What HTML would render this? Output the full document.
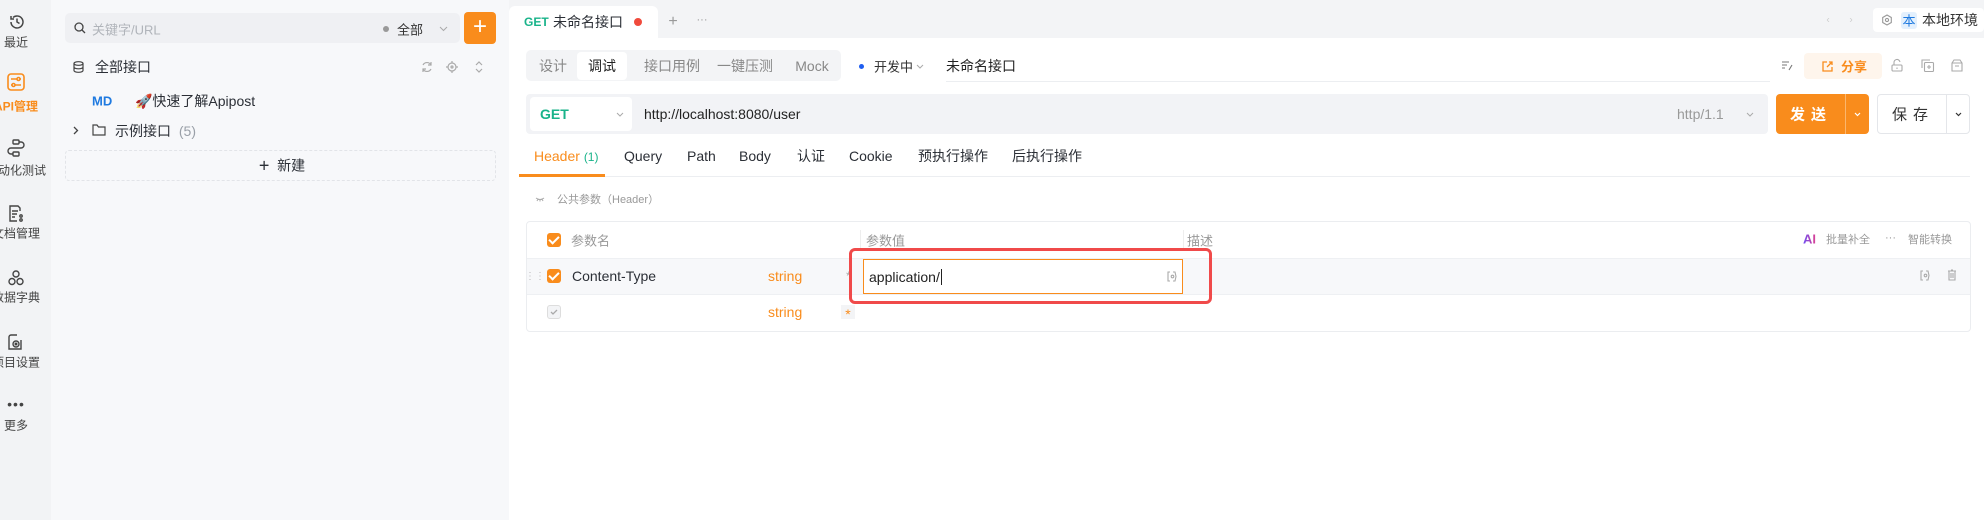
<!DOCTYPE html>
<html><head><meta charset="utf-8"><style>
*{margin:0;padding:0;box-sizing:border-box}
body{width:1984px;height:520px;overflow:hidden;background:#fff;font-family:"Liberation Sans","Noto Sans CJK SC",sans-serif;color:#2b2f36;position:relative}
.a{position:absolute;white-space:nowrap}
.c{transform:translate(-50%,-50%)}
.v{transform:translateY(-50%)}
.nav{left:0;top:0;width:51px;height:520px;background:#f2f3f5;overflow:hidden}
.nl{font-size:12px;color:#444;}
.side{left:51px;top:0;width:458px;height:520px;background:#f7f8fa}
.gray{color:#9aa0a8}
svg{position:absolute;overflow:visible}
.chk{position:absolute;width:14px;height:14px;border-radius:3px;background:#f98c1c}
.chk:after{content:"";position:absolute;left:4px;top:1px;width:4px;height:8px;border:solid #fff;border-width:0 2px 2px 0;transform:rotate(45deg)}
</style></head><body>
<div class="a nav"></div>
<svg style="left:8px;top:13px" width="18" height="18" viewBox="0 0 18 18" fill="none" stroke="#444" stroke-width="1.5"><path d="M3 9a6 6 0 1 0 2-4.5M3 3v3h3M9 5.5V9l2.5 1.5"/></svg>
<div class="a nl c" style="left:16px;top:42px">最近</div>
<svg style="left:7px;top:73px" width="18" height="18" viewBox="0 0 18 18" fill="none" stroke="#f98c1c" stroke-width="1.6"><rect x="1" y="1" width="16" height="16" rx="3"/><path d="M4 6h6M13 6h1M4 12h1M8 12h6"/><circle cx="11.5" cy="6" r="1.5"/><circle cx="6.5" cy="12" r="1.5"/></svg>
<div class="a nl c" style="left:16px;top:106px;color:#f98c1c;font-weight:bold">API管理</div>
<svg style="left:7px;top:139px" width="18" height="18" viewBox="0 0 18 18" fill="none" stroke="#444" stroke-width="1.4"><rect x="6" y="1" width="6" height="4" rx="1"/><rect x="6" y="13" width="6" height="4" rx="1"/><path d="M12 3h2a3 3 0 0 1 0 6H4a3 3 0 0 0 0 6h2"/></svg>
<div class="a nl c" style="left:16px;top:170px">自动化测试</div>
<svg style="left:8px;top:205px" width="16" height="17" viewBox="0 0 16 17" fill="none" stroke="#444" stroke-width="1.4"><path d="M12 6V3l-2-2H2v15h7M4 6h6M4 9h5M4 12h3"/><circle cx="13" cy="11" r="1.2"/><circle cx="13" cy="15" r="1.2"/></svg>
<div class="a nl c" style="left:16px;top:233px">文档管理</div>
<svg style="left:8px;top:270px" width="16" height="16" viewBox="0 0 16 16" fill="none" stroke="#444" stroke-width="1.4"><circle cx="8" cy="4" r="3"/><circle cx="4" cy="11.5" r="3"/><circle cx="12" cy="11.5" r="3"/></svg>
<div class="a nl c" style="left:16px;top:297px">数据字典</div>
<svg style="left:8px;top:334px" width="16" height="16" viewBox="0 0 16 16" fill="none" stroke="#444" stroke-width="1.4"><path d="M9 1H3a2 2 0 0 0-2 2v12h12V6"/><circle cx="8" cy="10" r="3"/><circle cx="8" cy="10" r=".8" fill="#444"/></svg>
<div class="a nl c" style="left:16px;top:362px">项目设置</div>
<div class="a c" style="left:16px;top:404px;font-size:14px;color:#444;letter-spacing:1px">•••</div>
<div class="a nl c" style="left:16px;top:425px">更多</div>

<div class="a side"></div>
<div class="a" style="left:65px;top:13px;width:395px;height:30px;background:#eff0f3;border-radius:5px"></div>
<svg style="left:74px;top:22px" width="12" height="12" viewBox="0 0 12 12" fill="none" stroke="#444" stroke-width="1.3"><circle cx="5" cy="5" r="4"/><path d="M8 8l3 3"/></svg>
<div class="a v" style="left:92px;top:29px;font-size:13px;color:#b0b4ba">关键字/URL</div>
<div class="a" style="left:383px;top:26px;width:6px;height:6px;border-radius:50%;background:#999"></div>
<div class="a v" style="left:397px;top:29px;font-size:13px;color:#333">全部</div>
<svg style="left:439px;top:26px" width="9" height="6" viewBox="0 0 9 6" fill="none" stroke="#aaa" stroke-width="1"><path d="M1 1l3.5 3.5L8 1"/></svg>
<div class="a" style="left:464px;top:12px;width:32px;height:32px;background:#f98c1c;border-radius:4px"></div>
<div class="a c" style="left:480px;top:27px;font-size:24px;color:#fff;font-weight:300">+</div>
<svg style="left:73px;top:61px" width="11" height="12" viewBox="0 0 11 12" fill="none" stroke="#444" stroke-width="1.2"><ellipse cx="5.5" cy="2.5" rx="4.5" ry="1.8"/><path d="M1 2.5v7c0 1 2 1.8 4.5 1.8S10 10.5 10 9.5v-7M1 6c0 1 2 1.8 4.5 1.8S10 7 10 6"/></svg>
<div class="a v" style="left:95px;top:67px;font-size:14px">全部接口</div>
<svg style="left:421px;top:61px" width="12" height="12" viewBox="0 0 12 12" fill="none" stroke="#aaa" stroke-width="1.2"><path d="M10 4A4.5 4.5 0 0 0 2 4M2 8a4.5 4.5 0 0 0 8 0M10 1v3H7M2 11V8h3"/></svg>
<svg style="left:446px;top:61px" width="12" height="12" viewBox="0 0 12 12" fill="none" stroke="#aaa" stroke-width="1.2"><circle cx="6" cy="6" r="4"/><circle cx="6" cy="6" r="1"/><path d="M6 0v2M6 10v2M0 6h2M10 6h2"/></svg>
<svg style="left:475px;top:61px" width="8" height="12" viewBox="0 0 8 12" fill="none" stroke="#aaa" stroke-width="1.2"><path d="M1 4l3-3 3 3M1 8l3 3 3-3"/></svg>
<div class="a v" style="left:92px;top:101px;font-size:13px;color:#1f7ae0;font-weight:bold">MD</div>
<div class="a v" style="left:135px;top:101px;font-size:14px">🚀快速了解Apipost</div>
<svg style="left:73px;top:126px" width="6" height="9" viewBox="0 0 6 9" fill="none" stroke="#444" stroke-width="1.3"><path d="M1 1l3.5 3.5L1 8"/></svg>
<svg style="left:92px;top:124px" width="14" height="12" viewBox="0 0 14 12" fill="none" stroke="#444" stroke-width="1.2"><path d="M1 1h4l1.5 2H13v8H1z"/></svg>
<div class="a v" style="left:115px;top:131px;font-size:14px">示例接口 <span class="gray" style="margin-left:4px">(5)</span></div>
<div class="a" style="left:65px;top:150px;width:431px;height:31px;border:1px dashed #e2e4e8;border-radius:4px"></div>
<div class="a c" style="left:282px;top:166px;font-size:14px"><span style="font-size:18px;vertical-align:-1px">+</span>&nbsp; 新建</div>

<!-- top bar -->
<div class="a" style="left:509px;top:0;width:1475px;height:38px;background:#f3f4f6"></div>
<div class="a" style="left:509px;top:6px;width:149px;height:32px;background:#fff;border-radius:6px 6px 0 0"></div>
<div class="a v" style="left:524px;top:22px;font-size:12px;color:#19b38a;font-weight:bold">GET</div>
<div class="a v" style="left:553px;top:22px;font-size:14px">未命名接口</div>
<div class="a" style="left:634px;top:18px;width:8px;height:8px;border-radius:50%;background:#f04a3c"></div>
<div class="a c" style="left:673px;top:22px;font-size:16px;color:#999">+</div>
<div class="a c" style="left:702px;top:20px;font-size:11px;color:#999">···</div>
<div class="a c" style="left:1828px;top:20px;font-size:10px;color:#ccc">‹</div>
<div class="a c" style="left:1851px;top:20px;font-size:10px;color:#ccc">›</div>
<div class="a" style="left:1873px;top:8px;width:111px;height:24px;background:#fff;border-radius:4px"></div>
<svg style="left:1881px;top:14px" width="12" height="12" viewBox="0 0 12 12" fill="none" stroke="#999" stroke-width="1.1"><path d="M6 1l4.3 2.5v5L6 11 1.7 8.5v-5z"/><circle cx="6" cy="6" r="1.6"/></svg>
<div class="a" style="left:1901px;top:12px;width:16px;height:17px;background:#e3f0fd;border-radius:3px"></div>
<div class="a c" style="left:1909px;top:20px;font-size:13px;color:#1f7ae0">本</div>
<div class="a v" style="left:1922px;top:20px;font-size:14px;color:#333">本地环境</div>

<!-- row2 -->
<div class="a" style="left:526px;top:50px;width:315px;height:31px;background:#f3f4f6;border-radius:5px"></div>
<div class="a" style="left:577px;top:52px;width:50px;height:28px;background:#fff;border-radius:4px"></div>
<div class="a c" style="left:553px;top:66px;font-size:14px;color:#888">设计</div>
<div class="a c" style="left:602px;top:66px;font-size:14px;color:#222">调试</div>
<div class="a c" style="left:672px;top:66px;font-size:14px;color:#888">接口用例</div>
<div class="a c" style="left:745px;top:66px;font-size:14px;color:#888">一键压测</div>
<div class="a c" style="left:812px;top:66px;font-size:14px;color:#888">Mock</div>
<div class="a" style="left:859px;top:64px;width:5px;height:5px;border-radius:50%;background:#1f5ef0"></div>
<div class="a v" style="left:874px;top:66px;font-size:13px;color:#333">开发中</div>
<svg style="left:916px;top:64px" width="8" height="5" viewBox="0 0 8 5" fill="none" stroke="#aaa"><path d="M1 1l3 3 3-3"/></svg>
<div class="a v" style="left:946px;top:66px;font-size:14px;color:#222">未命名接口</div>
<div class="a" style="left:946px;top:81px;width:824px;height:1px;background:#eceef1"></div>
<svg style="left:1781px;top:61px" width="12" height="10" viewBox="0 0 12 10" fill="none" stroke="#777" stroke-width="1.1"><path d="M1 1h7M1 4h5M1 7h3M11 4L8 9"/></svg>
<div class="a" style="left:1804px;top:53px;width:78px;height:26px;background:#fef5ec;border-radius:4px"></div>
<svg style="left:1822px;top:61px" width="11" height="11" viewBox="0 0 11 11" fill="none" stroke="#f98c1c" stroke-width="1.3"><path d="M5 1H1v9h9V6M7 1h3v3M10 1L5 6"/></svg>
<div class="a v" style="left:1841px;top:66px;font-size:13px;color:#f98c1c;font-weight:bold">分享</div>
<svg style="left:1891px;top:59px" width="12" height="13" viewBox="0 0 12 13" fill="none" stroke="#aaa" stroke-width="1.1"><rect x="1" y="6" width="10" height="6" rx="1"/><path d="M3 6V4a3 3 0 0 1 6-1"/><path d="M6 8.5v1.5"/></svg>
<svg style="left:1921px;top:59px" width="13" height="13" viewBox="0 0 13 13" fill="none" stroke="#aaa" stroke-width="1.1"><rect x="3.5" y="3.5" width="9" height="9" rx="1"/><path d="M1 9V1h8M8 6v4M6 8h4"/></svg>
<svg style="left:1950px;top:59px" width="14" height="13" viewBox="0 0 14 13" fill="none" stroke="#aaa" stroke-width="1.1"><path d="M2 4l2-3h6l2 3v8H2zM2 4h10M5 7h4"/></svg>

<!-- url row -->
<div class="a" style="left:526px;top:94px;width:1242px;height:40px;background:#f2f3f6;border-radius:4px"></div>
<div class="a" style="left:530px;top:97px;width:102px;height:34px;background:#fff;border-radius:4px"></div>
<div class="a v" style="left:540px;top:114px;font-size:14px;color:#19b38a;font-weight:bold">GET</div>
<svg style="left:616px;top:112px" width="8" height="5" viewBox="0 0 8 5" fill="none" stroke="#aaa"><path d="M1 1l3 3 3-3"/></svg>
<div class="a v" style="left:644px;top:114px;font-size:14px;color:#222">http://localhost:8080/user</div>
<div class="a v" style="left:1677px;top:114px;font-size:14px;color:#999">http/1.1</div>
<svg style="left:1746px;top:112px" width="8" height="5" viewBox="0 0 8 5" fill="none" stroke="#aaa"><path d="M1 1l3 3 3-3"/></svg>
<div class="a" style="left:1776px;top:94px;width:93px;height:40px;background:#f98c1c;border-radius:4px"></div>
<div class="a" style="left:1845px;top:94px;width:1px;height:40px;background:#fbb66d"></div>
<div class="a c" style="left:1811px;top:114px;font-size:15px;color:#fff;letter-spacing:6px;font-weight:bold">发送</div>
<svg style="left:1854px;top:112px" width="7" height="4" viewBox="0 0 7 4" fill="none" stroke="#fff" stroke-width="1.2"><path d="M1 1l2.5 2.5L6 1"/></svg>
<div class="a" style="left:1877px;top:94px;width:93px;height:40px;background:#fff;border:1px solid #e4e6ea;border-radius:4px"></div>
<div class="a" style="left:1946px;top:95px;width:1px;height:38px;background:#e4e6ea"></div>
<div class="a c" style="left:1913px;top:114px;font-size:15px;color:#333;letter-spacing:6px">保存</div>
<svg style="left:1955px;top:112px" width="7" height="4" viewBox="0 0 7 4" fill="none" stroke="#333" stroke-width="1.2"><path d="M1 1l2.5 2.5L6 1"/></svg>

<!-- tabs -->
<div class="a v" style="left:534px;top:156px;font-size:14px;color:#f98c1c">Header <span style="color:#19b38a;font-size:12px">(1)</span></div>
<div class="a v" style="left:624px;top:156px;font-size:14px">Query</div>
<div class="a v" style="left:687px;top:156px;font-size:14px">Path</div>
<div class="a v" style="left:739px;top:156px;font-size:14px">Body</div>
<div class="a v" style="left:797px;top:156px;font-size:14px">认证</div>
<div class="a v" style="left:849px;top:156px;font-size:14px">Cookie</div>
<div class="a v" style="left:918px;top:156px;font-size:14px">预执行操作</div>
<div class="a v" style="left:1012px;top:156px;font-size:14px">后执行操作</div>
<div class="a" style="left:519px;top:176px;width:1451px;height:1px;background:#eceef1"></div>
<div class="a" style="left:519px;top:174px;width:86px;height:3px;background:#f98c1c"></div>

<svg style="left:535px;top:197px" width="10" height="5" viewBox="0 0 10 5" fill="none" stroke="#aaa"><path d="M1 1q4 3 8 0M3 2l-1 2M7 2l1 2M5 2.5v2"/></svg>
<div class="a v" style="left:557px;top:199px;font-size:11px;color:#999">公共参数（Header）</div>

<!-- table -->
<div class="a" style="left:526px;top:221px;width:1445px;height:111px;border:1px solid #ebedf0;border-radius:4px"></div>
<div class="a" style="left:527px;top:258px;width:1443px;height:37px;background:#f7f8fa;border-top:1px solid #eef0f3;border-bottom:1px solid #eef0f3"></div>
<div class="chk" style="left:547px;top:233px"></div>
<div class="a v" style="left:571px;top:240px;font-size:13px;color:#999">参数名</div>
<div class="a" style="left:860px;top:230px;width:1px;height:20px;background:#eee"></div>
<div class="a v" style="left:866px;top:240px;font-size:13px;color:#999">参数值</div>
<div class="a" style="left:1183px;top:230px;width:1px;height:20px;background:#eee"></div>
<div class="a v" style="left:1187px;top:240px;font-size:13px;color:#999">描述</div>
<div class="a v" style="left:1803px;top:239px;font-size:13px;font-weight:bold;color:#8b3cf0;background:linear-gradient(90deg,#6a4cf5,#e0408f);-webkit-background-clip:text;background-clip:text;-webkit-text-fill-color:transparent">AI</div>
<div class="a v" style="left:1826px;top:239px;font-size:11px;color:#999">批量补全</div>
<div class="a v" style="left:1885px;top:238px;font-size:11px;color:#999">···</div>
<div class="a v" style="left:1908px;top:239px;font-size:11px;color:#999">智能转换</div>

<div class="a c" style="left:535px;top:277px;font-size:10px;color:#bbb;line-height:4px">⋮⋮</div>
<div class="chk" style="left:547px;top:269px"></div>
<div class="a v" style="left:572px;top:276px;font-size:14px">Content-Type</div>
<div class="a v" style="left:768px;top:276px;font-size:14px;color:#f98c1c">string</div>
<div class="a v" style="left:846px;top:276px;font-size:12px;color:#aaa">*</div>
<div class="a" style="left:849px;top:248px;width:363px;height:56px;border:3px solid #f04a4a;border-radius:6px"></div>
<div class="a" style="left:863px;top:259px;width:320px;height:35px;background:#fff;border:1px solid #f98c1c"></div>
<div class="a v" style="left:869px;top:277px;font-size:14px;color:#222">application/<span style="border-left:1px solid #222;margin-left:1px"></span></div>
<svg style="left:1166px;top:271px" width="11" height="11" viewBox="0 0 11 11" fill="none" stroke="#aaa" stroke-width="1.1"><path d="M4 1H2v9h2M7 1h2l1 4.5L9 10H7"/><circle cx="6.5" cy="5.5" r="1.3"/></svg>
<svg style="left:1919px;top:270px" width="11" height="11" viewBox="0 0 11 11" fill="none" stroke="#aaa" stroke-width="1.1"><path d="M4 1H2v9h2M7 1h2l1 4.5L9 10H7"/><circle cx="6.5" cy="5.5" r="1.3"/></svg>
<svg style="left:1947px;top:269px" width="10" height="12" viewBox="0 0 10 12" fill="none" stroke="#aaa" stroke-width="1.1"><path d="M1 2h8M4 1h2M2 2v9h6V2M4 4v5M6 4v5"/></svg>

<div class="a" style="left:547px;top:305px;width:14px;height:14px;border:1px solid #ddd;border-radius:3px;background:#f3f4f6"></div>
<svg style="left:550px;top:309px" width="8" height="6" viewBox="0 0 8 6" fill="none" stroke="#aaa" stroke-width="1.3"><path d="M1 3l2 2 4-4"/></svg>
<div class="a v" style="left:768px;top:312px;font-size:14px;color:#f98c1c">string</div>
<div class="a" style="left:841px;top:305px;width:14px;height:14px;background:#f3f4f6"></div>
<div class="a c" style="left:848px;top:314px;font-size:14px;color:#f98c1c">*</div>
</body></html>
